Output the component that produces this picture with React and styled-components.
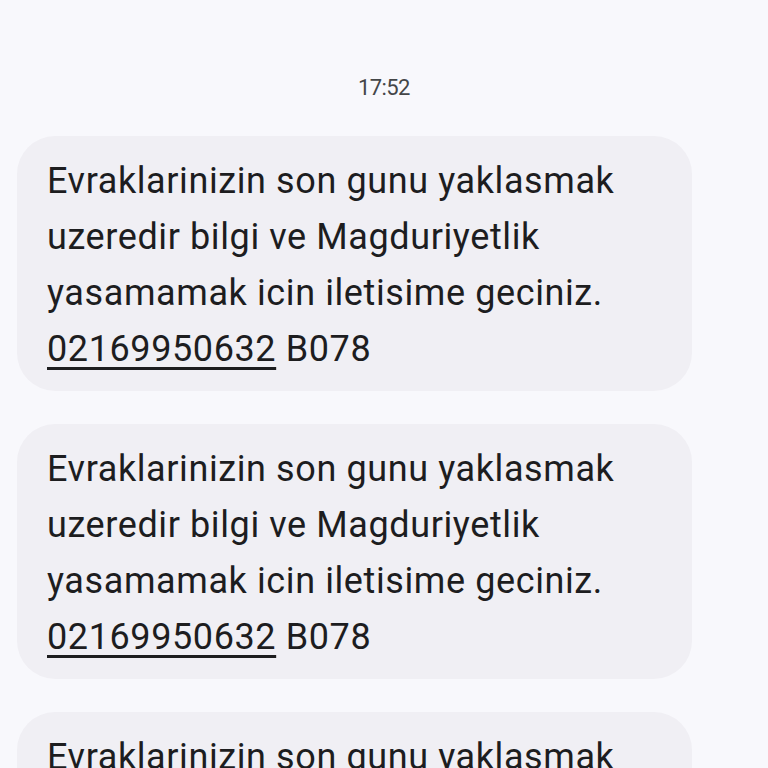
import React from 'react';
import styled, { createGlobalStyle } from 'styled-components';

const GlobalStyle = createGlobalStyle`
  html, body {
    margin: 0;
    padding: 0;
    background: #f8f8fc;
  }
  body {
    font-family: Roboto, "Noto Sans", sans-serif;
    color: #1f1f1f;
    overflow: hidden;
  }
`;

const Screen = styled.div`
  width: 768px;
  height: 768px;
  overflow: hidden;
  background: #f8f8fc;
  display: flex;
  flex-direction: column;
`;

const Timestamp = styled.div`
  text-align: center;
  font-size: 22px;
  color: #444648;
  padding-top: 75px;
  line-height: 26px;
  letter-spacing: -0.6px;
`;

const Thread = styled.div`
  display: flex;
  flex-direction: column;
  gap: 33px;
  padding: 35px 0 0 17px;
`;

const Bubble = styled.div`
  width: 675px;
  box-sizing: border-box;
  background: #f0eff4;
  border-radius: 38px;
  padding: 17px 30px 14px;
  font-size: 36px;
  line-height: 56px;
  color: #1d1d1f;
  letter-spacing: 0.6px;
`;

const Line = styled.div`
  white-space: nowrap;
`;

const Phone = styled.span`
  text-decoration: underline;
  text-decoration-thickness: 3px;
  text-underline-offset: 6px;
`;

const message = [
  'Evraklarinizin son gunu yaklasmak',
  'uzeredir bilgi ve Magduriyetlik',
  'yasamamak icin iletisime geciniz.',
];

const Message = () => (
  <Bubble>
    {message.map((l) => (
      <Line key={l}>{l}</Line>
    ))}
    <Line>
      <Phone>02169950632</Phone> B078
    </Line>
  </Bubble>
);

export default function App() {
  return (
    <Screen>
      <GlobalStyle />
      <Timestamp>17:52</Timestamp>
      <Thread>
        <Message />
        <Message />
        <Message />
      </Thread>
    </Screen>
  );
}
